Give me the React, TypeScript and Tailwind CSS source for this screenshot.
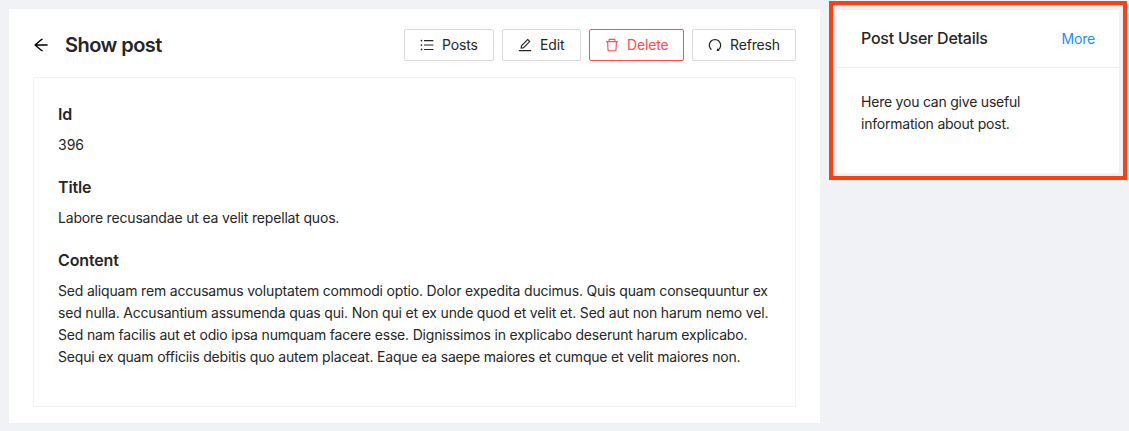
import type { ReactNode } from "react";
import {
  AiOutlineArrowLeft,
  AiOutlineDelete,
  AiOutlineEdit,
  AiOutlineRedo,
  AiOutlineUnorderedList,
} from "react-icons/ai";

// Trims the empty margin of the 1024-unit Ant Design glyphs.
const glyphBox = "64 64 896 896";

type ActionProps = { icon: ReactNode; label: string; width: string; danger?: boolean };

function Action({ icon, label, width, danger }: ActionProps) {
  const tone = danger ? "border-[#ff4d4f] text-[#ff4d4f]" : "border-[#d9d9d9] text-[#262626]";
  return (
    <button
      className={`flex h-8 items-center rounded-[2px] border bg-white pl-[15px] text-sm tracking-[-0.16px] shadow-[0_2px_0_rgba(0,0,0,0.015)] ${tone} ${width}`}
    >
      {icon}
      <span className="ml-2 whitespace-nowrap">{label}</span>
    </button>
  );
}

function Field({ name, children }: { name: string; children: ReactNode }) {
  return (
    <section className="mb-[19px]">
      <h5 className="mb-2 text-base leading-6 font-semibold tracking-[-0.14px]">{name}</h5>
      {children}
    </section>
  );
}

const contentLines = [
  "Sed aliquam rem accusamus voluptatem commodi optio. Dolor expedita ducimus. Quis quam consequuntur ex",
  "sed nulla. Accusantium assumenda quas qui. Non qui et ex unde quod et velit et. Sed aut non harum nemo vel.",
  "Sed nam facilis aut et odio ipsa numquam facere esse. Dignissimos in explicabo deserunt harum explicabo.",
  "Sequi ex quam officiis debitis quo autem placeat. Eaque ea saepe maiores et cumque et velit maiores non.",
];

export default function App() {
  return (
    <div className="flex h-[431px] w-[1129px] items-start overflow-hidden bg-[#f0f2f5] font-['Inter',sans-serif] text-sm leading-[22px] tracking-[-0.18px] text-[#262626]">
      <main className="mt-[9px] ml-[9px] h-[414px] w-[811px] bg-white px-6 pt-5">
        <header className="flex h-8 items-center">
          <AiOutlineArrowLeft size={16} viewBox={glyphBox} className="text-black" />
          <h1 className="ml-4 text-xl font-semibold tracking-[-0.55px]">Show post</h1>
          <div className="ml-auto flex gap-2">
            <Action
              icon={<AiOutlineUnorderedList size={14} viewBox={glyphBox} />}
              label="Posts"
              width="w-[90px]"
            />
            <Action
              icon={<AiOutlineEdit size={14} viewBox={glyphBox} />}
              label="Edit"
              width="w-[79px]"
            />
            <Action
              icon={<AiOutlineDelete size={14} viewBox={glyphBox} />}
              label="Delete"
              width="w-[95px]"
              danger
            />
            <Action
              icon={<AiOutlineRedo size={14} viewBox={glyphBox} />}
              label="Refresh"
              width="w-[104px]"
            />
          </div>
        </header>
        <div className="mt-4 h-[330px] rounded-[2px] border border-[#f0f0f0] px-6 pt-6">
          <Field name="Id">
            <p className="tracking-normal">396</p>
          </Field>
          <Field name="Title">
            <p>Labore recusandae ut ea velit repellat quos.</p>
          </Field>
          <Field name="Content">
            {contentLines.map((line) => (
              <p key={line} className="whitespace-nowrap">
                {line}
              </p>
            ))}
          </Field>
        </div>
      </main>
      <aside className="mt-px ml-[9px] h-[179px] w-[298px] border-4 border-[#fa4113] px-1 pt-[5px]">
        <div className="h-[163px] bg-white">
          <div className="flex h-[58px] items-center justify-between border-b border-[#f0f0f0] px-6">
            <h2 className="pb-0.5 text-base leading-[22px] font-medium tracking-[-0.24px]">Post User Details</h2>
            <a className="text-[#1890ff]">More</a>
          </div>
          <p className="px-6 pt-[23px] tracking-[-0.22px] whitespace-nowrap">
            Here you can give useful
            <br />
            information about post.
          </p>
        </div>
      </aside>
    </div>
  );
}
